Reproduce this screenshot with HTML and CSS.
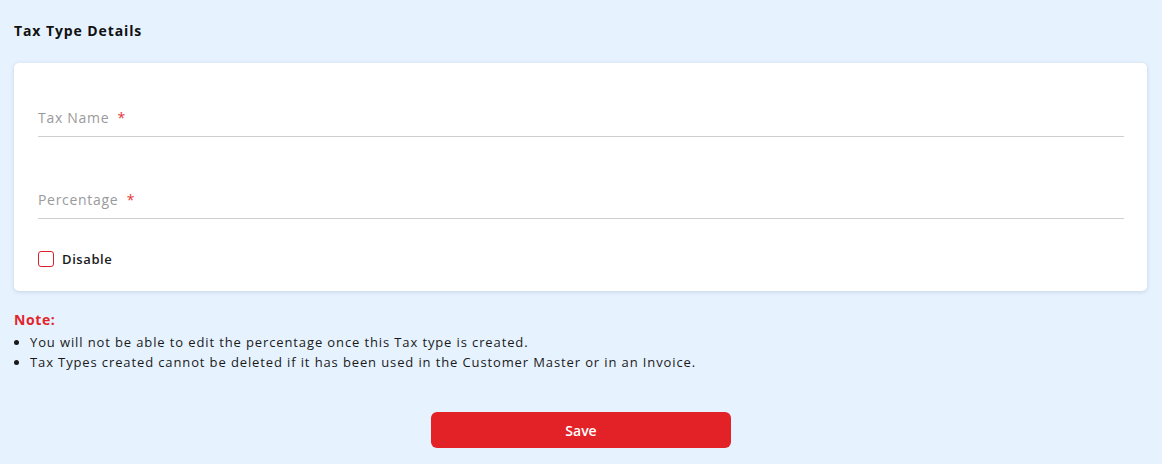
FILE: index.html
```html
<!DOCTYPE html>
<html>
<head>
<meta charset="utf-8">
<link rel="stylesheet" href="styles.css">
</head>
<body>
<div class="page">
  <h1 class="title">Tax Type Details</h1>
  <div class="card">
    <div class="field">
      <label class="label">Tax Name <span class="req">*</span></label>
    </div>
    <div class="field">
      <label class="label">Percentage <span class="req">*</span></label>
    </div>
    <label class="check">
      <span class="box"></span>
      <span class="check-text">Disable</span>
    </label>
  </div>
  <div class="note">
    <div class="note-title">Note:</div>
    <ul class="note-list">
      <li>You will not be able to edit the percentage once this Tax type is created.</li>
      <li>Tax Types created cannot be deleted if it has been used in the Customer Master or in an Invoice.</li>
    </ul>
  </div>
  <div class="actions">
    <button class="save">Save</button>
  </div>
</div>
</body>
</html>
```
FILE: styles.css
```css
html, body {
  margin: 0;
  padding: 0;
  background: #e6f2fe;
  font-family: "Open Sans", "Noto Sans", sans-serif;
  color: #1d1d1d;
}
.page {
  padding: 20px 15px 0 14px;
}
.title {
  margin: 0;
  font-size: 14px;
  font-weight: 700;
  line-height: 22px;
  letter-spacing: 0.9px;
  color: #111;
}
.card {
  margin-top: 21px;
  background: #fff;
  border-radius: 5px;
  box-shadow: 0 1px 4px rgba(60, 80, 110, 0.18);
  padding: 26px 23px 23px 24px;
}
.field {
  height: 48px;
  border-bottom: 1px solid #cfcfcf;
  display: flex;
  align-items: flex-end;
  padding-bottom: 8px;
  box-sizing: border-box;
}
.field + .field {
  margin-top: 34px;
}
.label {
  font-size: 14px;
  color: #9a9a9a;
  line-height: 20px;
  letter-spacing: 0.7px;
}
.req {
  color: #e53935;
  margin-left: 4px;
}
.check {
  display: flex;
  align-items: center;
  margin-top: 31px;
  height: 18px;
}
.box {
  width: 14px;
  height: 14px;
  border: 1.5px solid #d6222a;
  border-radius: 3px;
  background: #fff;
}
.check-text {
  margin-left: 8px;
  font-size: 13px;
  font-weight: 600;
  letter-spacing: 0.6px;
  color: #1a1a1a;
}
.note {
  margin-top: 20px;
}
.note-title {
  color: #e3242b;
  font-weight: 700;
  font-size: 14px;
  line-height: 18px;
  letter-spacing: 0.6px;
}
.note-list {
  margin: 3px 0 0 0;
  padding-left: 16px;
  font-size: 13px;
  line-height: 20px;
  letter-spacing: 0.88px;
  color: #1a1a1a;
}
.actions {
  display: flex;
  justify-content: center;
  margin-top: 40px;
  padding-left: 1px;
}
.save {
  width: 300px;
  height: 36px;
  border: none;
  border-radius: 6px;
  background: #e32227;
  color: #fff;
  font-family: "Open Sans", sans-serif;
  font-weight: 600;
  font-size: 14px;
}
```
